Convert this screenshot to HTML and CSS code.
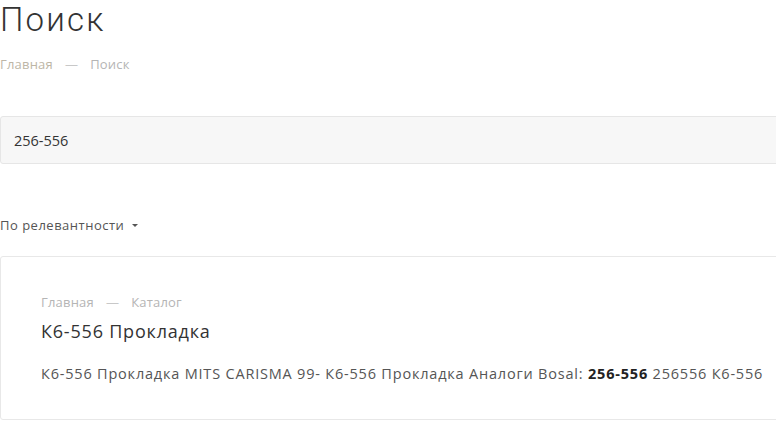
FILE: index.html
```html
<!DOCTYPE html>
<html lang="ru">
<head>
<meta charset="utf-8">
<title>Поиск</title>
<link rel="stylesheet" href="styles.css">
</head>
<body>
<div class="page">
  <h1 class="title">Поиск</h1>
  <div class="crumbs top-crumbs">
    <a class="crumb crumb-home" href="#">Главная</a>
    <span class="sep">—</span>
    <span class="crumb">Поиск</span>
  </div>
  <div class="search-box">
    <span class="search-value">256-556</span>
  </div>
  <div class="sort">
    <span class="sort-label">По релевантности</span>
    <span class="caret"></span>
  </div>
  <div class="result">
    <div class="crumbs card-crumbs">
      <a class="crumb" href="#">Главная</a>
      <span class="sep">—</span>
      <a class="crumb" href="#">Каталог</a>
    </div>
    <div class="result-title">К6-556 Прокладка</div>
    <div class="result-text">К6-556 Прокладка MITS CARISMA 99- К6-556 Прокладка Аналоги Bosal: <b>256-556</b> 256556 К6-556</div>
  </div>
</div>
</body>
</html>
```
FILE: styles.css
```css
html, body {
  margin: 0;
  padding: 0;
  background: #fff;
  overflow: hidden;
}
.page {
  font-family: "Open Sans", "Noto Sans", sans-serif;
  color: #333;
}
.title {
  margin: 0;
  padding-top: 1px;
  height: 38px;
  line-height: 38px;
  font-family: Roboto, "Open Sans", sans-serif;
  font-size: 33px;
  font-weight: 300;
  letter-spacing: 2.2px;
  color: #333;
}
.crumbs {
  display: flex;
  align-items: center;
  gap: 12px;
  font-size: 13px;
  letter-spacing: 0.2px;
  color: #b5b5b5;
}
.crumb {
  color: #b5b5b5;
  text-decoration: none;
}
.crumb-home {
  color: #bdb6a6;
}
.sep {
  color: #c8c8c8;
}
.top-crumbs {
  margin-top: 15px;
  height: 20px;
  line-height: 20px;
}
.search-box {
  margin-top: 42px;
  margin-right: -4px;
  height: 46px;
  border: 1px solid #e6e6e6;
  border-radius: 3px;
  background: #f7f7f7;
  display: flex;
  align-items: center;
  padding-left: 13px;
  font-size: 14.5px;
  color: #333;
}
.sort {
  margin-top: 51px;
  height: 20px;
  display: flex;
  align-items: center;
  gap: 8px;
  font-size: 13px;
  letter-spacing: 0.5px;
  color: #555;
}
.caret {
  width: 0;
  height: 0;
  border-left: 3px solid transparent;
  border-right: 3px solid transparent;
  border-top: 3px solid #555;
}
.result {
  margin-top: 21px;
  margin-right: -4px;
  border: 1px solid #e8e8e8;
  border-radius: 3px;
  padding: 35px 3px 35px 40px;
  height: 92px;
}
.card-crumbs {
  height: 20px;
  line-height: 20px;
}
.result-title {
  margin-top: 7px;
  height: 24px;
  line-height: 24px;
  font-size: 18px;
  letter-spacing: 0.8px;
  color: #333;
}
.result-text {
  margin-top: 21px;
  line-height: 20px;
  font-size: 14.5px;
  letter-spacing: 0.8px;
  white-space: nowrap;
  color: #555;
}
.result-text b {
  color: #222;
  font-weight: 700;
}
```
